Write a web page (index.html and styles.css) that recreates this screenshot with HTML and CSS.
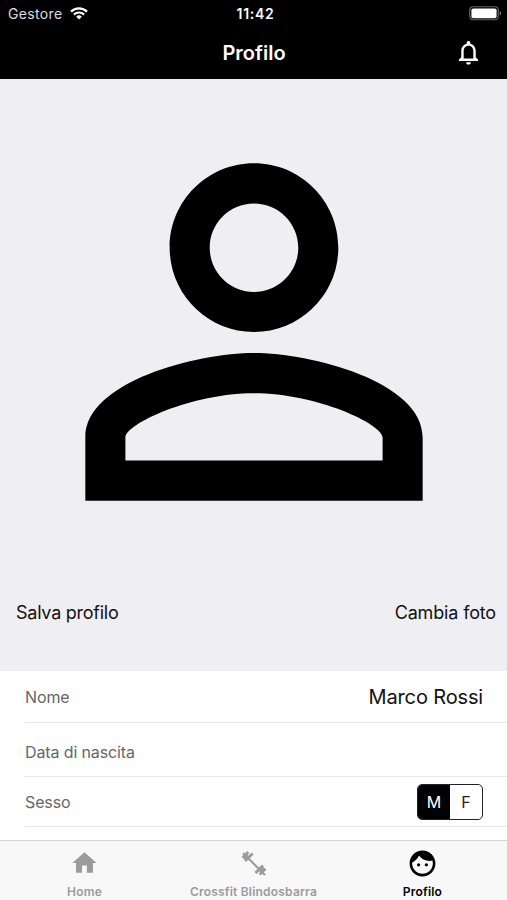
FILE: index.html
```html
<!DOCTYPE html>
<html lang="it">

<head>
    <meta charset="UTF-8">
    <meta name="viewport" content="width=device-width, initial-scale=1.0">
    <title>Profilo</title>
    <link rel="stylesheet" href="styles.css">
</head>

<body>
    <header class="header">
        <div class="status-bar">
            <div class="carrier">
                <span>Gestore</span>
                <svg class="wifi" viewBox="0 0 18 13">
                    <path d="M1 4.6a11.4 11.4 0 0 1 16 0" />
                    <path d="M3.9 7.6a7.3 7.3 0 0 1 10.2 0" />
                    <path class="wifi-dot" d="M6.2 9.7a4 4 0 0 1 5.6 0L9 12.5z" />
                </svg>
            </div>
            <span class="time">11:42</span>
            <svg class="battery" viewBox="0 0 33 15">
                <rect class="battery-case" x=".75" y=".75" width="28.5" height="13" rx="3.5" />
                <rect class="battery-level" x="2.4" y="2.5" width="25.2" height="9.7" rx="1.8" />
                <path class="battery-cap" d="M30.7 4.9c2 1 2 3.7 0 4.7z" />
            </svg>
        </div>
        <div class="nav-bar">
            <h1 class="nav-title">Profilo</h1>
            <button class="bell-btn" aria-label="Notifiche">
                <svg viewBox="0 0 24 24">
                    <path d="M12 22c1.1 0 2-.9 2-2h-4c0 1.100.9 2 2 2zm6-6v-5c0-3.070-1.630-5.640-4.500-6.320V4c0-.83-.67-1.500-1.500-1.500s-1.500.67-1.500 1.500v.68C7.640 5.360 6 7.920 6 11v5l-2 2v1h16v-1l-2-2zm-2 1H8v-6c0-2.480 1.510-4.500 4-4.500s4 2.020 4 4.500v6z" />
                </svg>
            </button>
        </div>
    </header>

    <main class="content">
        <svg class="photo" viewBox="0 0 24 24">
            <path d="M12 5.9c1.160 0 2.100.94 2.100 2.100s-.94 2.100-2.100 2.100S9.900 9.160 9.900 8s.94-2.100 2.100-2.100m0 9c2.970 0 6.100 1.460 6.100 2.100v1.100H5.900V17c0-.64 3.130-2.100 6.100-2.100M12 4C9.790 4 8 5.790 8 8s1.790 4 4 4 4-1.790 4-4-1.790-4-4-4zm0 9c-2.670 0-8 1.340-8 4v3h16v-3c0-2.660-5.330-4-8-4z" />
        </svg>
        <div class="actions">
            <button class="action-btn save">Salva profilo</button>
            <button class="action-btn">Cambia foto</button>
        </div>

        <div class="form">
            <div class="row row-name">
                <span class="label">Nome</span>
                <span class="value">Marco Rossi</span>
            </div>
            <div class="row row-date">
                <span class="label">Data di nascita</span>
            </div>
            <div class="row row-sex">
                <span class="label">Sesso</span>
                <div class="segmented">
                    <button class="segment active">M</button>
                    <button class="segment">F</button>
                </div>
            </div>
        </div>
    </main>

    <nav class="tab-bar">
        <a class="tab">
            <svg class="tab-icon home-icon" viewBox="0 0 24 24">
                <path d="M10 20v-6h4v6h5v-8h3L12 3 2 12h3v8z" />
            </svg>
            <span>Home</span>
        </a>
        <a class="tab">
            <svg class="tab-icon gym-icon" viewBox="0 0 30 30">
                <path d="M4 5l22 22" />
                <path class="plate" d="M3.600 9.700l5.700-5.700M6 13.100l7.600-7.600M20.700 26.500l5.700-5.700M16.400 25l7.600-7.600" />
                <path d="M5.500 11.500l4-4" class="plate" />
                <path d="M20.500 23.500l4-4" class="plate" />
            </svg>
            <span class="tab-gym">Crossfit Blindosbarra</span>
        </a>
        <a class="tab active">
            <svg class="tab-icon face-icon" viewBox="0 0 24 24">
                <path d="M9 11.750c-.69 0-1.250.56-1.250 1.250s.56 1.250 1.250 1.250 1.250-.56 1.250-1.250-.56-1.250-1.250-1.250zm6 0c-.69 0-1.250.56-1.250 1.250s.56 1.250 1.250 1.250 1.250-.56 1.250-1.250-.56-1.250-1.250-1.250zM12 2C6.480 2 2 6.480 2 12s4.480 10 10 10 10-4.480 10-10S17.520 2 12 2zm0 18c-4.410 0-8-3.590-8-8 0-.29.02-.58.05-.86 2.360-1.050 4.230-2.980 5.210-5.370C11.070 8.330 14.050 10 17.420 10c.78 0 1.530-.09 2.250-.26.21.71.33 1.470.33 2.260 0 4.410-3.590 8-8 8z" />
            </svg>
            <span class="tab-profile">Profilo</span>
        </a>
    </nav>
</body>

</html>
```

FILE: styles.css
```css
* {
    margin: 0;
    padding: 0;
    box-sizing: border-box;
    font-family: Inter, "Liberation Sans", sans-serif;
}

body {
    display: flex;
    flex-direction: column;
    height: 100vh;
    overflow: hidden;
    background-color: #efeef3;
    color: #111;
}

button {
    border: none;
    background: none;
    cursor: pointer;
}

svg {
    display: block;
    flex-shrink: 0;
}

.header {
    height: 79px;
    flex-shrink: 0;
    background-color: #000;
    color: #fff;
}

.status-bar {
    display: grid;
    grid-template-columns: 1fr auto 1fr;
    align-items: center;
    height: 27px;
    padding: 0 5px 0 8px;
}

.carrier {
    display: flex;
    align-items: center;
    gap: 7px;
    font-size: 14px;
    color: #ddd;
    letter-spacing: 0.35px;
}

.wifi {
    width: 18px;
    height: 13px;
    fill: none;
    stroke: #fff;
    stroke-width: 2.2;
}

.wifi-dot {
    fill: #fff;
    stroke: none;
}

.time {
    padding-left: 1px;
    font-size: 14px;
    font-weight: 600;
    letter-spacing: 0.7px;
}

.battery {
    width: 33px;
    height: 15px;
    justify-self: end;
}

.battery-case {
    fill: none;
    stroke: #666;
    stroke-width: 1.2;
}

.battery-level {
    fill: #fff;
}

.battery-cap {
    fill: #777;
}

.nav-bar {
    display: grid;
    grid-template-columns: 1fr auto 1fr;
    align-items: center;
    height: 51px;
    padding: 0 24px 0 25px;
}

.nav-title {
    grid-column: 2;
    font-size: 20px;
    font-weight: 600;
}

.bell-btn {
    justify-self: end;
}

.bell-btn svg {
    width: 29px;
    height: 29px;
    fill: #fff;
}

.content {
    flex: 1;
    min-height: 0;
    overflow: hidden;
}

.photo {
    width: 508px;
    height: 506px;
}

.actions {
    display: flex;
    justify-content: space-between;
    align-items: flex-start;
    height: 86px;
    padding: 17px 11px 0 16px;
}

.action-btn {
    font-size: 18px;
    line-height: 22px;
    letter-spacing: -0.15px;
    color: #111;
}

.save {
    letter-spacing: -0.25px;
}

.form {
    height: 200px;
    padding-left: 25px;
    background-color: #fff;
}

.row {
    display: flex;
    align-items: center;
    justify-content: space-between;
    padding-right: 24px;
    border-bottom: 1px solid #e8e8e8;
}

.row-name {
    height: 52px;
}

.row-date {
    height: 54px;
    padding-top: 5px;
}

.row-sex {
    height: 50px;
}

.label {
    font-size: 16px;
    letter-spacing: -0.12px;
    color: #666;
}

.value {
    font-size: 20px;
    letter-spacing: -0.15px;
}

.segmented {
    display: flex;
    width: 66px;
    height: 36px;
    border: 1.5px solid #222;
    border-radius: 5px;
    overflow: hidden;
}

.segment {
    flex: 1;
    font-size: 16px;
    color: #222;
}

.segment.active {
    background-color: #000;
    color: #fff;
}

.tab-bar {
    display: grid;
    grid-template-columns: repeat(3, 1fr);
    height: 60px;
    flex-shrink: 0;
    border-top: 1px solid #d5d5d5;
    background-color: #f8f8f8;
}

.tab {
    display: flex;
    flex-direction: column;
    align-items: center;
    justify-content: space-between;
    padding: 7px 0 1px;
    font-size: 12px;
    font-weight: 600;
    line-height: 15px;
    letter-spacing: 0.2px;
    color: #9b9b9b;
}

.tab.active {
    color: #000;
}

.tab-icon {
    width: 30px;
    height: 30px;
    fill: currentColor;
}

.home-icon {
    width: 29px;
}

.gym-icon {
    fill: none;
    stroke: currentColor;
    stroke-width: 2.2;
}

.face-icon {
    width: 31px;
    height: 31px;
}

.plate {
    stroke-width: 2.8;
}
```
